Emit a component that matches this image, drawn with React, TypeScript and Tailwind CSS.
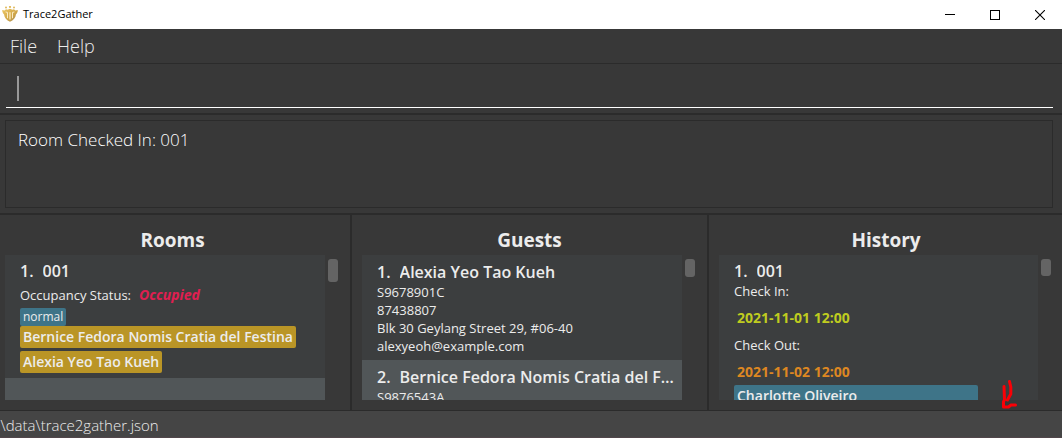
import type { ReactNode } from "react";

function ShieldLogo() {
  return (
    <svg className="size-4 shrink-0" viewBox="0 0 16 16" aria-hidden="true">
      <defs>
        <linearGradient id="gold" x1="0" y1="0" x2="1" y2="1">
          <stop offset="0" stopColor="#ecc765" />
          <stop offset="0.55" stopColor="#d3a94a" />
          <stop offset="1" stopColor="#a08550" />
        </linearGradient>
      </defs>
      <g fill="#e0b95c">
        <circle cx="4" cy="1.6" r="1" />
        <circle cx="8" cy="1" r="1.1" />
        <circle cx="12" cy="1.6" r="1" />
      </g>
      <path
        fill="url(#gold)"
        d="M0.2 4 2.6 4.4 4 3.2 5.6 3.8 8 2.8 10.400 3.800 12 3.200 13.400 4.400 15.800 4C15.700 6.600 14.800 7.600 14 8.200 13.600 11.600 11.500 14.300 8 15.800 4.500 14.300 2.400 11.600 2 8.200 1.200 7.600 .3 6.600 .2 4Z"
      />
      <path
        d="M5.500 12.200V6.400L3.600 6M10.500 12.200V6.400L12.400 6"
        fill="none"
        stroke="#fff3d2"
        strokeWidth="0.9"
      />
      <path d="M7.300 6.200H8.700V13.400H7.300Z" fill="#f8e6b4" />
    </svg>
  );
}

function TitleBar() {
  const button = "flex h-[29px] w-[45px] items-center justify-center text-black";
  return (
    <header className="flex h-[29px] shrink-0 items-center justify-between bg-white pl-[2px] text-black">
      <div className="flex items-center gap-[5px] pb-[2px]">
        <ShieldLogo />
        <h1 className="text-[11px] leading-4">Trace2Gather</h1>
      </div>
      <div className="flex">
        <button className={button} aria-label="Minimize">
          <svg width="10" height="10" shapeRendering="crispEdges">
            <path d="M0 4H10V5H0Z" />
          </svg>
        </button>
        <button className={button} aria-label="Maximize">
          <svg width="10" height="10" shapeRendering="crispEdges">
            <path d="M0.5 0.5H9.5V9.5H0.5Z" fill="none" stroke="currentColor" />
          </svg>
        </button>
        <button className={button} aria-label="Close">
          <svg width="10" height="10">
            <path d="M0 0 10 10M10 0 0 10" stroke="currentColor" strokeWidth="1.1" />
          </svg>
        </button>
      </div>
    </header>
  );
}

function Panel({
  title,
  className,
  thumb,
  children,
}: {
  title: string;
  className: string;
  thumb: string;
  children: ReactNode;
}) {
  return (
    <section className={`flex min-h-0 min-w-0 flex-col pt-3 pb-[10px] ${className}`}>
      <h2 className="h-7 shrink-0 text-center text-[19px] leading-[26px] font-bold">{title}</h2>
      <div className="flex min-h-0 flex-1">
        <ul className="min-w-0 flex-1 overflow-hidden bg-[#3c3e3f]">{children}</ul>
        <div className="w-[15px] shrink-0 pt-1 pl-[3px]">
          <div className={`w-[10px] rounded-[3px] bg-[#646464] ${thumb}`} />
        </div>
      </div>
    </section>
  );
}

function Heading({ index, children }: { index: number; children: string }) {
  return (
    <h3 className="flex gap-[9px] text-[16px] leading-[22px] font-semibold">
      <span>{index}.</span>
      <span className="truncate">{children}</span>
    </h3>
  );
}

export default function App() {
  return (
    <div className="flex h-screen min-h-[400px] flex-col overflow-hidden bg-[#383838] font-['Open_Sans',sans-serif] text-[#ececec]">
      <TitleBar />
      <nav className="flex h-[35px] shrink-0 gap-5 border-b border-[#2b2b2b] px-[10px] text-[18px] leading-[34px] font-light">
        <button>File</button>
        <button>Help</button>
      </nav>
      <div className="shrink-0 border-b-2 border-[#2b2b2b] pr-[9px] pb-[5px] pl-[6px]">
        <div className="flex h-11 items-center border-b border-white px-[11px]">
          <span className="mt-[5px] h-[25px] w-[2px] shrink-0 bg-[#999999]" />
          <input
            aria-label="Command"
            className="min-w-0 flex-1 bg-transparent text-[18px] font-light outline-none"
          />
        </div>
      </div>
      <div className="shrink-0 border-b-2 border-[#2b2b2b] pt-[5px] pr-[9px] pb-[5px] pl-[5px]">
        <output className="block h-[88px] border border-[#2b2b2b] px-3 py-[7px] text-[17px] leading-6 font-light text-white">
          Room Checked In: 001
        </output>
      </div>

      <main className="grid min-h-0 flex-1 grid-cols-[350fr_357fr_355fr] grid-rows-1">
        <Panel title="Rooms" className="pr-[10px] pl-[5px]" thumb="h-[23px]">
          <li className="h-[123px] px-[15px] pt-[5px] text-[13px] leading-[18px]">
            <Heading index={1}>001</Heading>
            <p className="mt-1 flex gap-2">
              <span>Occupancy Status:</span>
              <em className="text-[14px] font-bold text-[#e01f51]">Occupied</em>
            </p>
            <div className="mt-1 flex flex-col items-start">
              <span className="rounded-[2px] bg-[#3e7488] px-[3px] text-[12px]">normal</span>
              <span className="rounded-[2px] bg-[#ba9526] px-[3px] text-[14px] leading-[22px] font-semibold">
                Bernice Fedora Nomis Cratia del Festina
              </span>
              <span className="mt-[3px] rounded-[2px] bg-[#ba9526] px-[3px] text-[14px] leading-[22px] font-semibold">
                Alexia Yeo Tao Kueh
              </span>
            </div>
          </li>
          <li className="h-[123px] bg-[#515658]" />
        </Panel>

        <Panel
          title="Guests"
          className="border-l-2 border-[#2b2b2b] pr-[10px] pl-[10px]"
          thumb="h-[18px]"
        >
          <li className="h-[105px] px-[15px] pt-[6px] text-[13px] leading-[18px]">
            <Heading index={1}>Alexia Yeo Tao Kueh</Heading>
            <p>S9678901C</p>
            <p>87438807</p>
            <p>Blk 30 Geylang Street 29, #06-40</p>
            <p>alexyeoh@example.com</p>
          </li>
          <li className="h-[105px] bg-[#515658] pt-[6px] pr-[7px] pl-[15px] text-[13px] leading-[18px]">
            <Heading index={2}>Bernice Fedora Nomis Cratia del Festina</Heading>
            <p>S9876543A</p>
          </li>
        </Panel>

        <Panel
          title="History"
          className="border-l-2 border-[#2b2b2b] pr-[9px] pl-[10px]"
          thumb="h-[17px]"
        >
          <li className="px-[15px] pt-[5px] text-[13px] leading-[18px]">
            <Heading index={1}>001</Heading>
            <p>Check In:</p>
            <p className="px-[3px] py-[9px] text-[14px] font-bold text-[#bfcc1f]">2021-11-01 12:00</p>
            <p>Check Out:</p>
            <p className="px-[3px] pt-[9px] pb-1 text-[14px] font-bold text-[#dd8722]">2021-11-02 12:00</p>
            <p className="mr-[45px] rounded-[2px] bg-[#3e7488] px-[3px] text-[14px] leading-[22px] font-semibold">
              Charlotte Oliveiro
            </p>
          </li>
        </Panel>
      </main>

      <footer className="h-7 shrink-0 border-t border-b border-t-[#2b2b2b] border-b-[#51464a] bg-[#454545] text-[15px] leading-7">
        <span className="-ml-[3px] font-light">.\data\trace2gather.json</span>
      </footer>

      <svg
        className="pointer-events-none absolute right-[42px] bottom-[26px]"
        width="20"
        height="32"
        viewBox="0 0 20 32"
        fill="none"
        stroke="#fb0006"
        strokeWidth="3"
        strokeLinecap="round"
        strokeLinejoin="round"
        aria-hidden="true"
      >
        <path d="M9.500 1.500 10.800 7V14L7.500 20M4 6.500 4.500 20L3.500 21.500V27H8.500L11 25H15.500" />
      </svg>
    </div>
  );
}
